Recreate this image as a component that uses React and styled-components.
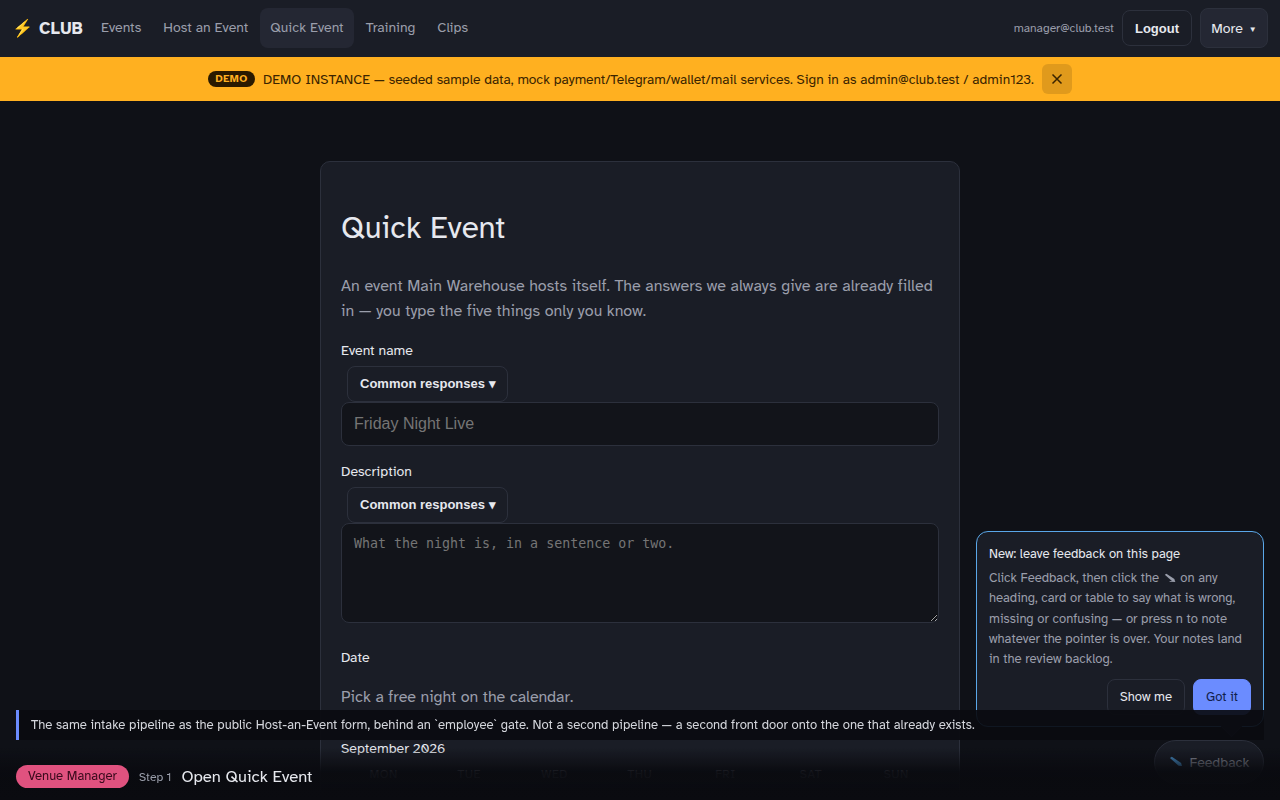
import React from "react";
import styled, { createGlobalStyle } from "styled-components";

const Global = createGlobalStyle`
  html, body { margin: 0; padding: 0; background: #0f1117; }
  body { font-family: "Atkinson Hyperlegible", "Liberation Sans", sans-serif; color: #e6e8ee; font-size: 16px; }
  * { box-sizing: border-box; }
`;

const UI = `"Atkinson Hyperlegible", "Liberation Sans", sans-serif`;

const Nav = styled.nav`
  height: 57px; background: #1a1d26;
  display: flex; align-items: center; justify-content: space-between; padding: 0 12px 1px;
`;
const NavLeft = styled.div`display: flex; align-items: center; gap: 2px;`;
const Brand = styled.a`width: 77px; font-size: 17px; font-weight: 700; color: #e6e8ee; letter-spacing: .3px; white-space: nowrap;`;
const NavLink = styled.a`
  font-size: 14px; color: #9a9eab;
  background: ${p => (p.$active ? "#242733" : "transparent")};
  padding: 12px 10px; border-radius: 8px; line-height: 16px; height: 40px;
`;
const NavRight = styled.div`display: flex; align-items: center; gap: 8px;`;
const Email = styled.span`font-size: 12px; color: #9a9eab;`;
const LogoutBtn = styled.button`
  font: 700 13px "Liberation Sans", sans-serif; color: #e6e8ee; background: transparent;
  border: 1px solid #2c303c; border-radius: 8px; height: 36px; width: 70px; padding: 0;
`;
const MoreBtn = styled.button`
  font: 400 14px ${UI}; color: #e6e8ee; background: #242733;
  border: 1px solid #2c303c; border-radius: 8px; height: 40px; width: 68px; padding: 0;
`;
const Caret = styled.span`font-size: 8px; margin-left: 2px; vertical-align: 1px;`;

const Banner = styled.div`
  height: 44px; background: #ffb020; color: #3a2400; font-size: 13.73px;
  display: flex; align-items: center; justify-content: center; gap: 8px;
`;
const DemoTag = styled.span`
  width: 47px; text-align: center; background: #2a1a00; color: #ffb020; border-radius: 999px; font-size: 10.5px; font-weight: 700;
  letter-spacing: .5px; padding: 2px 0; line-height: 12px;
`;
const CloseBtn = styled.button`
  width: 30px; height: 30px; border: none; border-radius: 6px; background: rgba(0,0,0,.12); color: #3a2400;
  padding: 0; display: grid; place-items: center;
`;

const Main = styled.main`padding: 60px 0 40px; display: flex; justify-content: center;`;
const Card = styled.section`
  width: 640px; background: #1a1d26; border: 1px solid #2c303c; border-radius: 10px; padding: 20px;
`;
const Title = styled.h1`font-size: 31.4px; font-weight: 400; line-height: 36px; margin: 28px 0 0; color: #e6e8ee;`;
const Lead = styled.p`font-size: 16px; line-height: 25px; color: #9a9eab; margin: 28px 0 0; letter-spacing: .05px;`;
const Field = styled.div`margin-top: ${p => p.$mt || 0}px;`;
const Label = styled.label`display: block; font-size: 14px; line-height: 17px; color: #e6e8ee;`;
const PresetBtn = styled.button`
  display: block; margin: 7px 0 0 6px; height: 36px; width: 161px; padding: 0 12px 2px; text-align: left;
  font: 700 13px "Liberation Sans", sans-serif; color: #e6e8ee; background: transparent;
  border: 1px solid #2c303c; border-radius: 8px; white-space: nowrap;
`;
const TextInput = styled.input`
  display: block; width: 100%; height: 44px; padding: 0 12px; font: 16px "Liberation Sans", sans-serif;
  color: #e6e8ee; background: #12141a; border: 1px solid #2c303c; border-radius: 8px;
  &::placeholder { color: #757575; }
`;
const TextArea = styled.textarea`
  display: block; width: 100%; height: 100px; padding: 10px 12px; font: 13.3px/20px "DejaVu Sans Mono", monospace;
  color: #e6e8ee; background: #12141a; border: 1px solid #2c303c; border-radius: 8px;
  &::placeholder { color: #757575; }
`;
const Hint = styled.p`font-size: 16px; line-height: 20px; color: #9a9eab; margin: 21px 0 0;`;
const Month = styled.div`font-size: 14px; line-height: 17px; color: #e6e8ee; margin-top: 33px;`;
const Weekdays = styled.div`display: grid; grid-template-columns: repeat(7, 1fr); margin-top: 9px; padding-bottom: 120px;`;
const Weekday = styled.div`text-align: center; font-size: 12px; color: #9a9eab; letter-spacing: .5px; line-height: 16px;`;

const Popup = styled.aside`
  position: fixed; right: 16px; bottom: 73px; width: 288px; height: 196px; background: #1a1d26;
  border: 1px solid #5aa7e8; border-radius: 12px; padding: 12px;
  &::after { content: ""; position: absolute; right: 24px; bottom: -8px; width: 14px; height: 14px;
    background: #1a1d26; transform: rotate(45deg); border-right: 1px solid #2c303c; border-bottom: 1px solid #2c303c; }
`;
const PopupTitle = styled.div`font-size: 13px; line-height: 20px; color: #e6e8ee;`;
const PopupText = styled.p`font-size: 13px; line-height: 20.3px; color: #9a9eab; margin: 4px 0 0;`;
const PopupActions = styled.div`display: flex; justify-content: flex-end; gap: 8px; margin-top: 10px;`;
const ShowBtn = styled.button`
  font: 400 13px ${UI}; color: #e6e8ee; background: transparent; border: 1px solid #2c303c;
  border-radius: 8px; height: 36px; padding: 0 12px;
`;
const GotBtn = styled.button`
  font: 400 13px ${UI}; color: #12204a; background: #6b8cff; border: 1px solid #6b8cff;
  border-radius: 8px; height: 36px; padding: 0 12px;
`;
const FeedbackBtn = styled.button`
  position: fixed; right: 16px; bottom: 16px; width: 110px; height: 44px; border-radius: 22px;
  background: #1a1d26; border: 1px solid #2c303c; color: #9a9eab; font: 400 14px ${UI}; padding: 0;
  display: flex; align-items: center; justify-content: center; gap: 7px;
`;
const PenSvg = styled.svg`display: inline-block; vertical-align: -1px; margin: 0 ${p => (p.$inline ? 1 : 0)}px;`;
const Pen = ({ size = 14, color = "#4f9fe0", inline }) => (
  <PenSvg $inline={inline} width={size} height={size * 0.8} viewBox="0 0 15 12">
    <path d="M1 2.2 3 .8l10 6.6.9 3.4-3.6-.4z" fill={color} />
    {inline && <path d="M7 10.6h7" stroke={color} strokeWidth="1" />}
  </PenSvg>
);
const TourWrap = styled.div`
  position: fixed; left: 0; right: 0; bottom: 0; padding: 10px 16px 12px; height: 100px;
  background: linear-gradient(to bottom, rgba(10,11,16,0) 48%, rgba(10,11,16,.95) 72%, rgba(10,11,16,1) 100%);
`;
const Caption = styled.div`
  height: 30px; display: flex; align-items: center; padding-left: 12px; border-left: 3px solid #6b8cff;
  background: rgba(10,11,16,.92); color: #d4d6dc; font-size: 13px; letter-spacing: .025px; white-space: nowrap;
`;
const TourRow = styled.div`display: flex; align-items: center; margin-top: 25px;`;
const Persona = styled.span`
  background: #e0527f; color: #3a0a1c; font-size: 13px; line-height: 23px; height: 23px; padding: 0 12px; border-radius: 999px;
`;
const Step = styled.span`font-size: 12px; color: #9a9eab; margin-left: 10px;`;
const StepTitle = styled.span`font-size: 16.6px; color: #e6e8ee; margin-left: 10px;`;

const days = ["MON", "TUE", "WED", "THU", "FRI", "SAT", "SUN"];

export default function App() {
  return (
    <>
      <Global />
      <Nav>
        <NavLeft>
          <Brand>⚡ CLUB</Brand>
          <NavLink>Events</NavLink>
          <NavLink>Host an Event</NavLink>
          <NavLink $active>Quick Event</NavLink>
          <NavLink>Training</NavLink>
          <NavLink>Clips</NavLink>
        </NavLeft>
        <NavRight>
          <Email>manager@club.test</Email>
          <LogoutBtn>Logout</LogoutBtn>
          <MoreBtn>More <Caret>▼</Caret></MoreBtn>
        </NavRight>
      </Nav>
      <Banner>
        <DemoTag>DEMO</DemoTag>
        <span>DEMO INSTANCE — seeded sample data, mock payment/Telegram/wallet/mail services. Sign in as admin@club.test / admin123.</span>
        <CloseBtn>
          <svg width="12" height="12" viewBox="0 0 12 12" fill="none" stroke="currentColor" strokeWidth="1.5"><path d="M1.5 1.5l9 9M10.5 1.5l-9 9" /></svg>
        </CloseBtn>
      </Banner>
      <Main>
        <Card>
          <Title>Quick Event</Title>
          <Lead>An event Main Warehouse hosts itself. The answers we always give are already filled in — you type the five things only you know.</Lead>
          <Field $mt={18}>
            <Label>Event name</Label>
            <PresetBtn>Common responses ▾</PresetBtn>
            <TextInput placeholder="Friday Night Live" />
          </Field>
          <Field $mt={17}>
            <Label>Description</Label>
            <PresetBtn>Common responses ▾</PresetBtn>
            <TextArea placeholder="What the night is, in a sentence or two." />
          </Field>
          <Field $mt={26}>
            <Label>Date</Label>
            <Hint>Pick a free night on the calendar.</Hint>
            <Month>September 2026</Month>
            <Weekdays>{days.map(d => <Weekday key={d}>{d}</Weekday>)}</Weekdays>
          </Field>
        </Card>
      </Main>
      <Popup>
        <PopupTitle>New: leave feedback on this page</PopupTitle>
        <PopupText>Click Feedback, then click the <Pen size={12} color="#9a9eab" inline /> on any heading, card or table to say what is wrong, missing or confusing — or press n to note whatever the pointer is over. Your notes land in the review backlog.</PopupText>
        <PopupActions><ShowBtn>Show me</ShowBtn><GotBtn>Got it</GotBtn></PopupActions>
      </Popup>
      <FeedbackBtn><Pen />Feedback</FeedbackBtn>
      <TourWrap>
        <Caption>The same intake pipeline as the public Host-an-Event form, behind an `employee` gate. Not a second pipeline — a second front door onto the one that already exists.</Caption>
        <TourRow>
          <Persona>Venue Manager</Persona>
          <Step>Step 1</Step>
          <StepTitle>Open Quick Event</StepTitle>
        </TourRow>
      </TourWrap>
    </>
  );
}
